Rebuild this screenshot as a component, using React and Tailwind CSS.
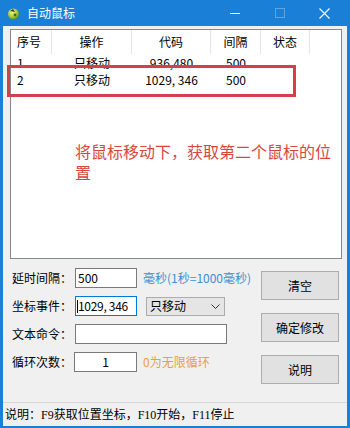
import React from "react";

const cjk = { fontFamily: '"Noto Sans CJK SC", "Liberation Sans", sans-serif' };
const serif = { fontFamily: '"Liberation Serif", "Noto Sans CJK SC", serif' };

function AppIcon() {
  return (
    <svg width="13" height="13" viewBox="0 0 13 13">
      <defs>
        <radialGradient id="g" cx="0.4" cy="0.35" r="0.7">
          <stop offset="0" stopColor="#f4f49a" />
          <stop offset="0.6" stopColor="#a8c83a" />
          <stop offset="1" stopColor="#4f8a24" />
        </radialGradient>
      </defs>
      <ellipse cx="6.5" cy="7" rx="5.5" ry="5.5" fill="url(#g)" />
      <path d="M3 4 L6 2 L8 5 Z" fill="#2e4a1c" />
      <circle cx="8" cy="8" r="1.4" fill="#3f6b22" />
    </svg>
  );
}

export default function App() {
  const cols = [
    { w: "w-[41px]", label: "序号", left: true },
    { w: "w-[80px]", label: "操作" },
    { w: "w-[79px]", label: "代码" },
    { w: "w-[50px]", label: "间隔" },
    { w: "w-[49px]", label: "状态" },
  ];
  const rows = [
    ["1", "只移动", "936,480", "500", ""],
    ["2", "只移动", "1029, 346", "500", ""],
  ];
  return (
    <div className="relative w-[350px] h-[428px] bg-[#1a7fd6] flex flex-col overflow-hidden text-[12px] text-black" style={cjk}>
      {/* title bar */}
      <div className="h-[26px] flex items-center shrink-0">
        <div className="ml-[7px] mt-[1px] flex items-center">
          <AppIcon />
        </div>
        <span className="ml-[7px] text-white text-[12px] leading-none">自动鼠标</span>
        <div className="ml-auto flex items-center h-full pr-[3px]">
          <div className="w-[45px] h-full flex items-center justify-center">
            <div className="w-[10px] h-[1px] bg-white" />
          </div>
          <div className="w-[45px] h-full flex items-center justify-center">
            <div className="w-[10px] h-[10px] border border-[#5fa3df]" />
          </div>
          <div className="w-[45px] h-full flex items-center justify-center">
            <svg width="11" height="11" viewBox="0 0 11 11">
              <path d="M0.5 0.5 L10.5 10.5 M10.5 0.5 L0.5 10.5" stroke="white" strokeWidth="1.1" />
            </svg>
          </div>
        </div>
      </div>

      {/* client area */}
      <div className="mx-[3px] h-[400px] bg-[#f0f0f0] flex flex-col">
        {/* list box */}
        <div className="mt-[3px] ml-[7px] w-[332px] h-[230px] bg-white border border-[#828790] shrink-0">
          <div className="flex h-[24px] items-center">
            {cols.map((c, i) => (
              <div
                key={i}
                className={`${c.w} h-full flex items-center border-r border-[#e5e5e5] ${c.left ? "pl-[6px]" : "justify-center"}`}
              >
                {c.label}
              </div>
            ))}
          </div>
          {rows.map((r, ri) => (
            <div key={ri} className="flex h-[17px] items-center">
              {cols.map((c, i) => (
                <div key={i} className={`${c.w} flex items-center ${c.left ? "pl-[6px]" : "justify-center"}`}>
                  {r[i]}
                </div>
              ))}
            </div>
          ))}
        </div>

        {/* form area */}
        <div className="flex h-[143px] shrink-0">
          <div className="pl-[9px] pt-[9px] flex flex-col gap-[8px] w-[255px]">
            <div className="flex items-center h-[20px]">
              <span className="w-[63px]">延时间隔：</span>
              <div className="w-[62px] h-[20px] bg-white border border-[#7a7a7a] flex items-center pl-[2px]">500</div>
              <span className="ml-[6px] text-[#3c8fd6]">毫秒(1秒=1000毫秒)</span>
            </div>
            <div className="flex items-center h-[20px]">
              <span className="w-[63px]">坐标事件：</span>
              <div className="w-[62px] h-[20px] bg-white border border-[#0078d7] flex items-center pl-[1px] overflow-hidden whitespace-nowrap tracking-[-0.3px]">
                <span className="w-[1px] h-[13px] bg-black shrink-0" />1029, 346
              </div>
              <div className="ml-[9px] w-[79px] h-[19px] bg-[#e5e5e5] border border-[#acacac] flex items-center pl-[3px] pr-[4px]">
                <span>只移动</span>
                <svg className="ml-auto" width="9" height="5" viewBox="0 0 9 5">
                  <path d="M0.5 0.5 L4.5 4.5 L8.5 0.5" stroke="#333" strokeWidth="1" fill="none" />
                </svg>
              </div>
            </div>
            <div className="flex items-center h-[20px]">
              <span className="w-[63px]">文本命令：</span>
              <div className="w-[152px] h-[20px] bg-white border border-[#7a7a7a]" />
            </div>
            <div className="flex items-center h-[20px]">
              <span className="w-[62px]">循环次数：</span>
              <div className="w-[63px] h-[20px] bg-white border border-[#7a7a7a] flex items-center justify-center">1</div>
              <span className="ml-[6px] text-[#e8a040]">0为无限循环</span>
            </div>
          </div>
          <div className="ml-[3px] pt-[12px] flex flex-col gap-[13px]">
            <div className="w-[78px] h-[29px] bg-[#e1e1e1] border border-[#adadad] flex items-center justify-center">清空</div>
            <div className="w-[78px] h-[29px] bg-[#e1e1e1] border border-[#adadad] flex items-center justify-center">确定修改</div>
            <div className="w-[78px] h-[29px] bg-[#e1e1e1] border border-[#adadad] flex items-center justify-center">说明</div>
          </div>
        </div>

        {/* status bar */}
        <div className="h-[24px] border-t border-[#d7d7d7] flex items-center pl-[2px] pt-[1px]" style={serif}>
          说明：F9获取位置坐标，F10开始，F11停止
        </div>
      </div>

      {/* annotations */}
      <div className="absolute left-[7px] top-[65px] w-[289px] h-[32px] border-[3px] border-[#d4404a]" />
      <div className="absolute left-[75px] top-[141px] w-[270px] text-[16px] leading-[21px] text-[#d8463f] flex flex-col">
        <div className="h-[21px] whitespace-nowrap">将鼠标移动下，获取第二个鼠标的位</div>
        <div className="h-[21px]">置</div>
      </div>
    </div>
  );
}
